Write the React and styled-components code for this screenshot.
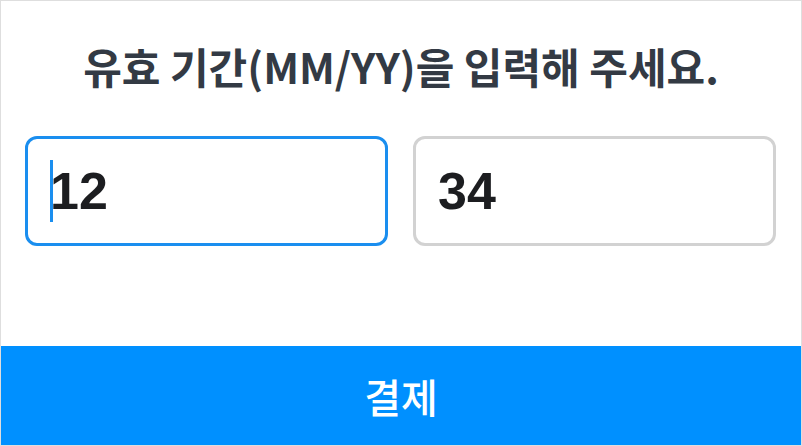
import React from 'react';
import styled, { createGlobalStyle } from 'styled-components';

const GlobalStyle = createGlobalStyle`
  html, body {
    margin: 0;
    padding: 0;
    background: #ffffff;
  }
  * {
    box-sizing: border-box;
  }
`;

const Page = styled.div`
  width: 802px;
  height: 446px;
  border: 1px solid #dedede;
  display: flex;
  flex-direction: column;
  background: #ffffff;
`;

const Title = styled.h1`
  margin: 0;
  height: 135px;
  padding-bottom: 6px;
  display: flex;
  align-items: center;
  justify-content: center;
  font-family: "Noto Sans CJK KR", "Noto Sans", sans-serif;
  font-size: 42px;
  font-weight: 700;
  letter-spacing: 0;
  color: #333a44;
`;

const Fields = styled.div`
  display: grid;
  grid-template-columns: 363px 363px;
  gap: 25px;
  padding: 0 25px 0 24px;
`;

const Field = styled.div`
  height: 110px;
  border: 3px solid ${p => (p.focused ? '#1a8eef' : '#d2d2d2')};
  border-radius: 12px;
  padding-left: 22px;
  display: flex;
  align-items: center;
  font-family: "Liberation Sans", Arial, sans-serif;
  font-size: 52px;
  font-weight: 700;
  color: #1c1d20;
`;

const Caret = styled.span`
  display: inline-block;
  width: 3px;
  height: 62px;
  margin-right: -3px;
  background: #1a8eef;
`;

const PayButton = styled.button`
  margin-top: auto;
  height: 99px;
  border: none;
  background: #0090ff;
  color: #ffffff;
  font-family: "Noto Sans CJK KR", "Noto Sans", sans-serif;
  font-size: 40px;
  font-weight: 500;
  cursor: pointer;
`;

export default function App() {
  return (
    <>
      <GlobalStyle />
      <Page>
        <Title>유효 기간(MM/YY)을 입력해 주세요.</Title>
        <Fields>
          <Field focused>
            <Caret />
            12
          </Field>
          <Field>34</Field>
        </Fields>
        <PayButton>결제</PayButton>
      </Page>
    </>
  );
}
